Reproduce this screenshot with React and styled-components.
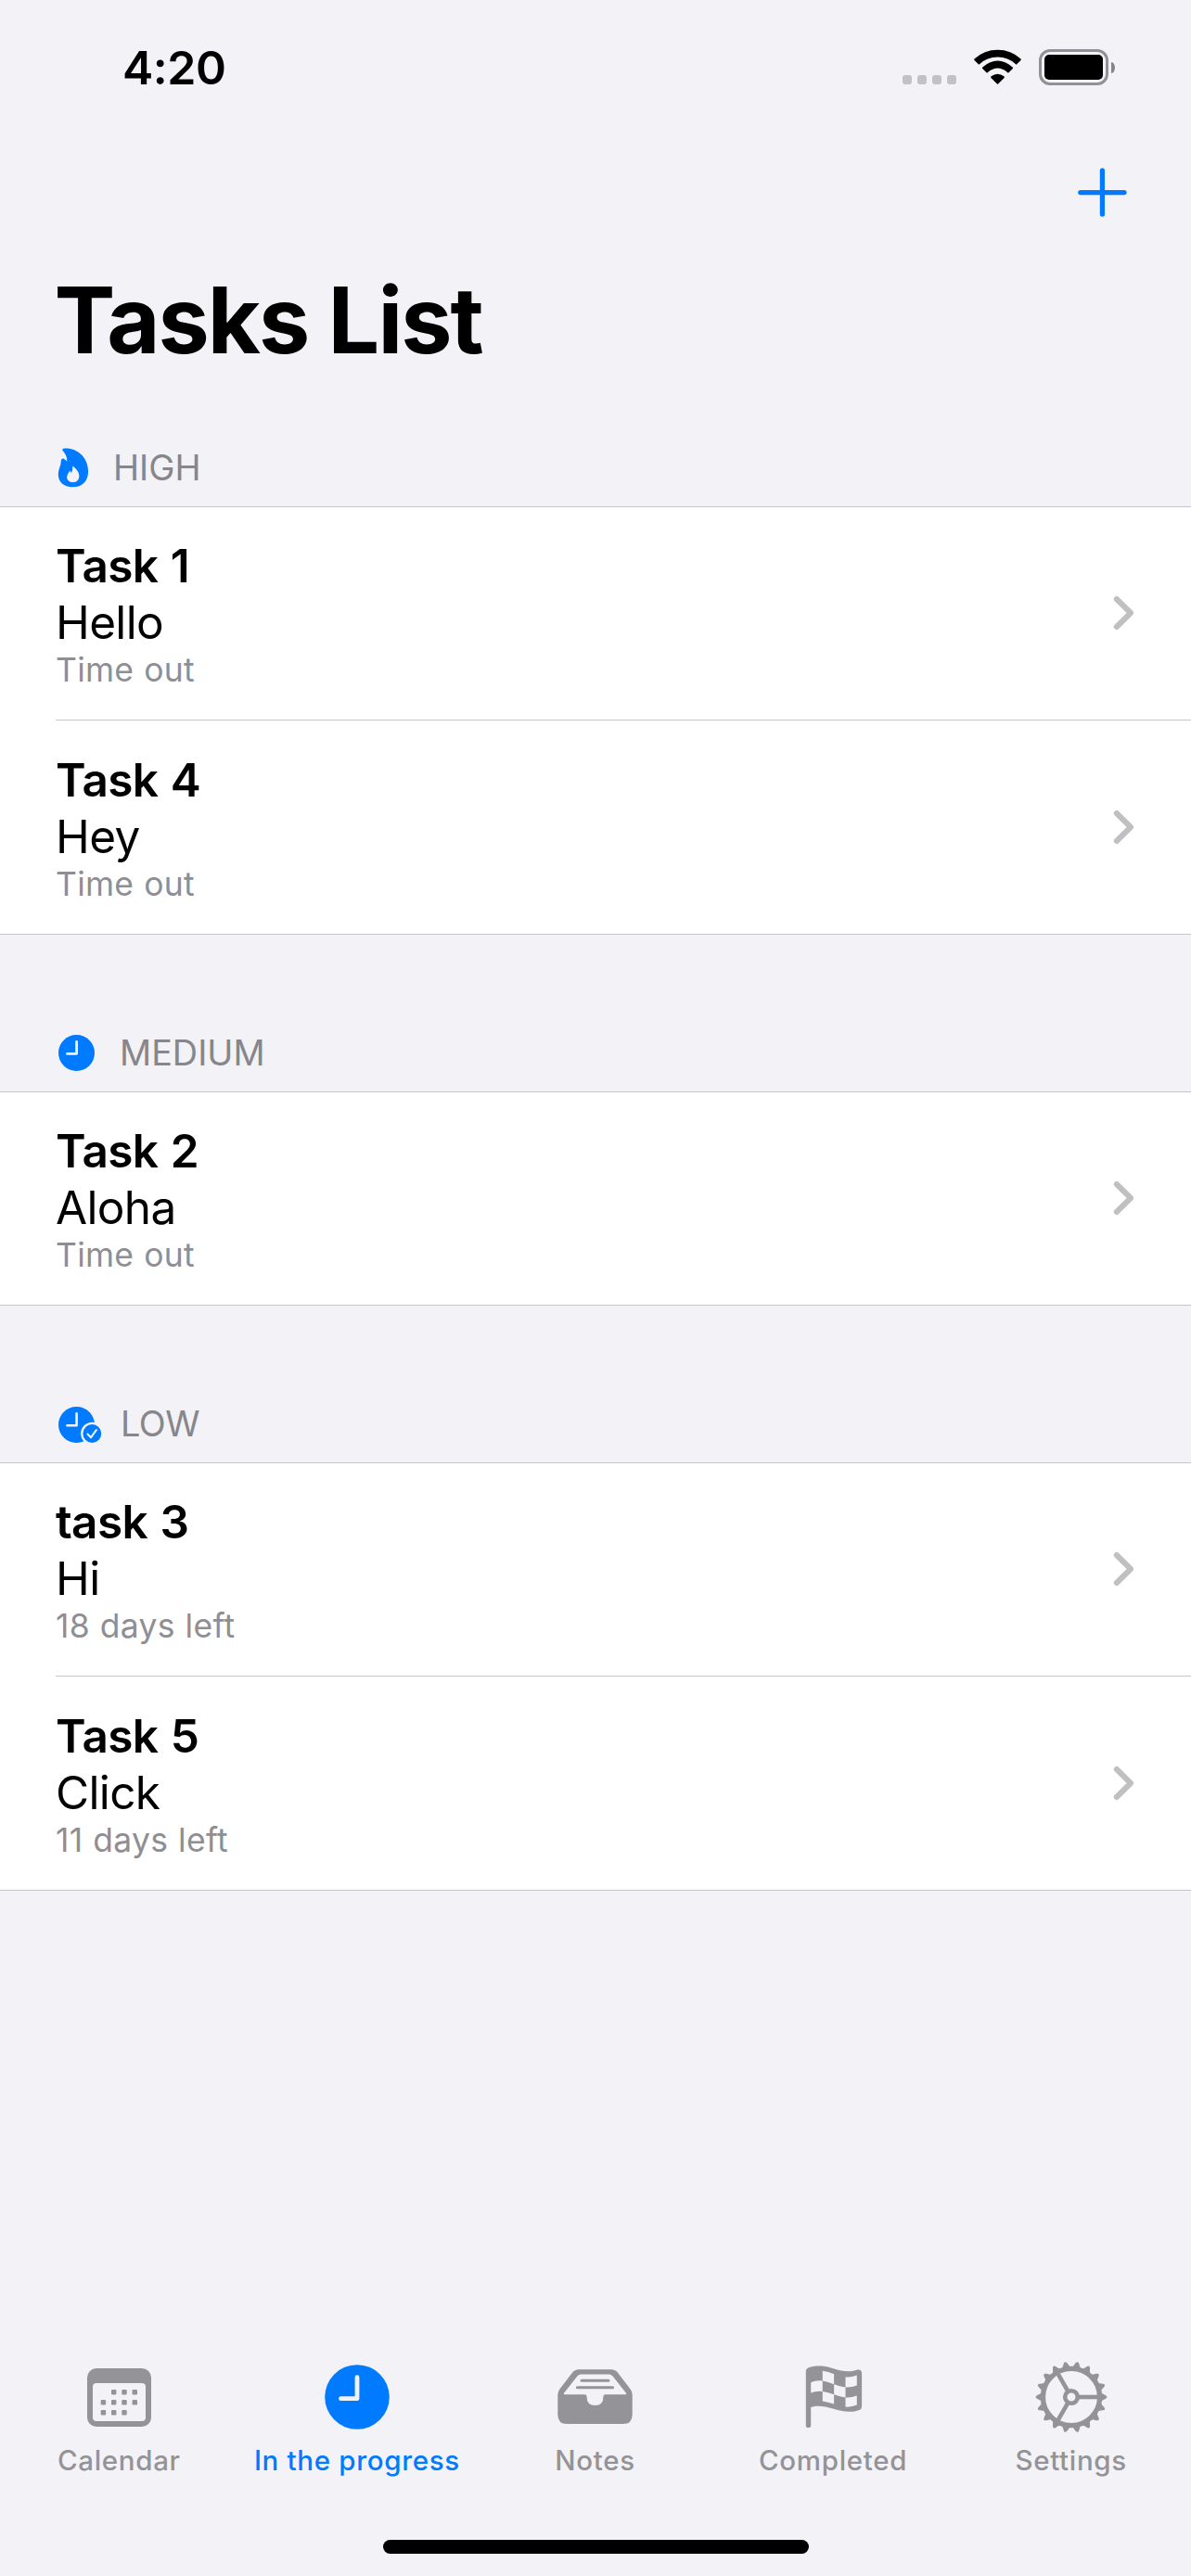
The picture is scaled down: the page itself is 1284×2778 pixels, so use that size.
import React from "react";
import styled, { createGlobalStyle } from "styled-components";

const GlobalStyle = createGlobalStyle`
  * { box-sizing: border-box; }
  body { margin: 0; background: #f2f2f7; }
`;

const BLUE = "#007aff";
const GRAY = "#939398";

const Screen = styled.div`
  width: 1284px;
  height: 2778px;
  display: flex;
  flex-direction: column;
  background: #f2f2f7;
  color: #000;
  font-family: Inter, "Liberation Sans", sans-serif;
  overflow: hidden;
  white-space: nowrap;
`;

const StatusBar = styled.header`
  height: 132px;
  padding: 43px 82px 0 132px;
  display: flex;
  justify-content: space-between;
  align-items: flex-start;
`;

const Clock = styled.time`
  font-size: 50px;
  line-height: 60px;
  font-weight: 600;
  letter-spacing: -0.5px;
`;

const StatusIcons = styled.div`
  display: flex;
  align-items: flex-start;
  padding-top: 10px;
`;

const Cellular = styled.div`
  display: flex;
  gap: 6px;
  margin: 28px 19px 0 0;
`;

const CellDot = styled.span`
  width: 10px;
  height: 10px;
  border-radius: 3px;
  background: #c2c1c6;
`;

const WifiSvg = styled.svg`
  width: 51px;
  height: 39px;
  margin-right: 19px;
`;

const Battery = styled.div`
  width: 75px;
  height: 39px;
  padding: 3px;
  border: 3px solid #929296;
  border-radius: 12px;
`;

const BatteryLevel = styled.div`
  height: 27px;
  border-radius: 5px;
  background: #000;
`;

const BatteryTip = styled.div`
  width: 4px;
  height: 12px;
  margin: 13.5px 0 0 3px;
  border-radius: 0 4px 4px 0 / 0 6px 6px 0;
  background: #858588;
`;

const NavBar = styled.nav`
  height: 153px;
  display: flex;
  justify-content: flex-end;
  align-items: flex-start;
  padding: 49px 69px 0 0;
`;

const IconButton = styled.button`
  display: flex;
  padding: 0;
  border: 0;
  background: none;
  color: ${BLUE};
`;

const Title = styled.h1`
  margin: 0;
  padding-left: 58.5px;
  font-size: 98.7px;
  line-height: 120px;
  font-weight: 700;
  letter-spacing: -2px;
`;

const SectionHeader = styled.h2`
  margin: 0;
  height: ${(p) => (p.$first ? 141 : 169)}px;
  padding: 0 0 18px 60px;
  display: flex;
  align-items: flex-end;
  font-size: 37.8px;
  line-height: 48px;
  font-weight: 400;
  color: #86868b;
  letter-spacing: ${(p) => p.$track}px;
`;

const SectionIcon = styled.span`
  display: flex;
  width: ${(p) => p.$width}px;
  height: 48px;
  color: ${BLUE};
`;

const List = styled.ul`
  margin: 0;
  padding: 0;
  list-style: none;
  background: #fff;
  border-top: 1px solid #c6c6c8;
  border-bottom: 1px solid #c6c6c8;
`;

const Row = styled.li`
  margin-left: 60px;
  height: ${(p) => (p.$divided ? 231 : 229)}px;
  padding-right: 60px;
  display: flex;
  justify-content: space-between;
  align-items: center;
  ${(p) => p.$divided && "border-top: 1px solid #c6c6c8;"}
`;

const TaskName = styled.div`
  font-size: 49.5px;
  line-height: 61px;
  font-weight: 600;
  letter-spacing: -0.6px;
  word-spacing: 1.4px;
`;

const TaskNote = styled.div`
  font-size: 49.5px;
  line-height: 61px;
  letter-spacing: -0.65px;
`;

const TaskDue = styled.div`
  font-size: 35.5px;
  line-height: 41px;
  color: #8e8e93;
  letter-spacing: 0.25px;
  word-spacing: 0.7px;
`;

const ChevronSvg = styled.svg`
  width: 24px;
  height: 38px;
  margin-bottom: 1px;
`;

const Spacer = styled.div`
  flex: 1;
`;

const TabBar = styled.nav`
  height: 249px;
  display: flex;
  align-items: flex-start;
  padding: 12px 1px 0 0;
`;

const Tab = styled.a`
  flex: 1 1 0;
  min-width: 0;
  display: flex;
  flex-direction: column;
  align-items: center;
  color: ${(p) => (p.$active ? BLUE : GRAY)};
  font-size: 29.5px;
  line-height: 36px;
  font-weight: 500;
  letter-spacing: 0.68px;
`;

const TabIcon = styled.span`
  display: flex;
  height: 94px;
`;

const HomeArea = styled.div`
  height: 39px;
  margin-top: -39px;
  display: flex;
  justify-content: center;
`;

const HomeIndicator = styled.div`
  width: 459px;
  height: 15px;
  border-radius: 8px;
  background: #000;
`;

const Wifi = () => (
  <WifiSvg viewBox="0 0 51 39" fill="#000">
    <path d="M25.5 38 L18.4 31 Q17.6 30.1 18.6 29.3 Q25.5 24 32.4 29.3 Q33.4 30.1 32.6 31 Z" />
    <path d="M9.2 20.9 Q8.6 20.2 9.3 19.5 Q25.5 5.7 41.7 19.5 Q42.4 20.2 41.8 20.9 L37.5 25.2 Q37 25.7 36.3 25.2 Q25.5 16 14.7 25.2 Q14 25.7 13.5 25.2 Z" />
    <path d="M0.5 11.9 Q-0.1 11.2 0.5 10.5 Q11 0.7 25.5 0.7 Q40 0.7 50.5 10.5 Q51.1 11.2 50.5 11.9 L46.2 16.2 Q45.7 16.6 45.1 16.2 Q37 8.4 25.5 8.4 Q14 8.4 5.9 16.2 Q5.3 16.6 4.8 16.2 Z" />
  </WifiSvg>
);

const PlusIcon = () => (
  <svg width="53" height="53" viewBox="0 0 53 53" fill="none" stroke="currentColor" strokeWidth="5.2" strokeLinecap="round">
    <path d="M26.4 2.9v47.2M2.8 26.6h47.2" />
  </svg>
);

const Chevron = () => (
  <ChevronSvg viewBox="0 0 24 38" fill="none" stroke="#c0c0c2" strokeWidth="6" strokeLinecap="round" strokeLinejoin="round">
    <path d="M3.8 4L19 19L3.8 34" />
  </ChevronSvg>
);

const FlameIcon = () => (
  <svg width="40" height="48" viewBox="0 0 40 48" fill="currentColor" fillRule="evenodd">
    <path d="M7.6 6C6.6 4.6 7.8 3.6 10.4 3.6C24 3.4 35.1 14 35.1 28.5C35.1 39 28.5 45.3 18.4 45.3C8.8 45.3 2.8 39.8 2.8 31.5C2.8 25.6 5.8 22.5 5.8 17.5C5.8 14.8 7.6 13.8 9.2 14.9C10.6 15.8 11.4 16.6 12.2 17.4C12.6 12.8 10.4 9.4 7.6 6ZM19.2 23.2C18.5 22.6 18.2 23 18.2 23.8C18.4 26.6 17.6 28.6 16.8 30C16.2 29.2 16 28.2 15.8 27.4C13.8 29.6 12.2 32.2 12.2 34.8C12.2 38 14.8 40.1 18.6 40.1C22.6 40.1 25.3 37.4 25.3 33.4C25.3 29.2 22.8 26 19.2 23.2Z" />
  </svg>
);

const SmallClockIcon = () => (
  <svg width="48" height="48" viewBox="0 0 48 48" fill="none">
    <circle cx="22.5" cy="24.5" r="19.5" fill="currentColor" />
    <path d="M22.6 12.3V25.3H12.4" stroke="#f2f2f7" strokeWidth="2.8" strokeLinecap="round" strokeLinejoin="round" />
  </svg>
);

const ClockCheckIcon = () => (
  <svg width="52" height="48" viewBox="0 0 52 48" fill="none">
    <circle cx="22.5" cy="25.5" r="19.5" fill="currentColor" />
    <path d="M22.6 13.3V26.3H12.4" stroke="#f2f2f7" strokeWidth="2.6" strokeLinecap="round" strokeLinejoin="round" />
    <circle cx="39.3" cy="35" r="12.2" fill="#f2f2f7" />
    <circle cx="39.3" cy="35" r="9.9" fill="currentColor" />
    <path d="M34.6 35.6L38 39.2L43.9 31.2" stroke="#f2f2f7" strokeWidth="2.1" strokeLinecap="round" strokeLinejoin="round" />
  </svg>
);

const CALENDAR_DOTS = [
  [28.7, 25.7], [40, 25.7], [51.3, 25.7],
  [17.4, 36.7], [28.7, 36.7], [40, 36.7], [51.3, 36.7],
  [17.4, 47.7], [28.7, 47.7], [40, 47.7],
];

const CalendarIcon = () => (
  <svg width="69" height="88" viewBox="0 -13 69 88" fill="currentColor">
    <rect width="69" height="63" rx="10" />
    <rect x="6" y="16" width="57" height="41" rx="4" fill="#f2f2f7" />
    {CALENDAR_DOTS.map(([x, y]) => (
      <rect key={`${x}-${y}`} x={x - 2.7} y={y - 2.7} width="5.4" height="5.4" rx="1.2" />
    ))}
  </svg>
);

const BigClockIcon = () => (
  <svg width="70" height="88" viewBox="0 -9 70 88" fill="none">
    <circle cx="35" cy="35" r="34.8" fill="currentColor" />
    <path d="M35 13.7V36.7H17.5" stroke="#f2f2f7" strokeWidth="4.8" strokeLinecap="round" strokeLinejoin="round" />
  </svg>
);

const TrayIcon = () => (
  <svg width="81" height="88" viewBox="0 -14 81 88" fill="none">
    <path d="M0.3 49V27.5Q0.3 24.5 2.4 21.6L16 3.8Q18.8 0.3 23 0.3H58Q62.2 0.3 65 3.8L78.6 21.6Q80.7 24.5 80.7 27.5V49Q80.7 59 70.7 59H10.3Q0.3 59 0.3 49Z" fill="currentColor" />
    <path d="M7 25.8L21.2 7.8Q23 5.6 25.5 5.6H55.5Q58 5.6 59.8 7.8L74 25.8Q74.8 27.2 73.4 27.2H51.5Q49.5 27.2 49.5 29.2Q49.5 39 40.5 39Q31.5 39 31.5 29.2Q31.5 27.2 29.5 27.2H7.6Q6.2 27.2 7 25.8Z" fill="#f2f2f7" />
    <path d="M26 12.2H55M21.4 19.8H59.6" stroke="currentColor" strokeWidth="3" strokeLinecap="round" />
  </svg>
);

const FlagIcon = () => (
  <svg width="61" height="88" viewBox="-0.8 -10 61 88" fill="none" overflow="visible">
    <path d="M0 6.5Q0 3.4 3 2.2C9 -0.2 19 -0.2 27 2.4C37 5.6 46 8 54.5 4.8Q60.3 3.4 60.3 8.8V44Q60.3 47 57.6 48C49 51.4 38 49.6 29 46.6C20 43.6 12 42.6 5.4 45V64.4Q5.4 67 2.7 67Q0 67 0 64.4Z" fill="currentColor" />
    <g fill="#f2f2f7">
      <path d="M18 5.8Q24 6.8 30.3 9.2V20.2Q24 17.6 18 16.6Z" />
      <path d="M42.7 12.4Q49 13 55 10.6V21.6Q49 23.8 42.7 23.4Z" />
      <path d="M5.4 18.2Q11.4 15.6 18 16.6V28Q11.4 27 5.4 29.6Z" />
      <path d="M30.3 20.2Q36.6 22.4 42.7 23.4V34.4Q36.6 33.6 30.3 31.2Z" />
      <path d="M18 28Q24 28.8 30.3 31.2V41.4Q24 39.2 18 38.4Z" />
      <path d="M42.7 34.4Q49 34.8 55 32.4V42.6Q49 45.2 42.7 44.6Z" />
    </g>
  </svg>
);

const TEETH = Array.from({ length: 18 }, (_, i) => i * 20);

const GearIcon = () => (
  <svg width="78" height="88" viewBox="-39 -44 78 88" fill="none" stroke="currentColor">
    <circle r="30.6" strokeWidth="5.4" />
    <circle r="6.8" strokeWidth="4.6" />
    {[0, 120, 240].map((angle) => (
      <path key={angle} d="M8 0H29" strokeWidth="4.6" transform={`rotate(${angle})`} />
    ))}
    {TEETH.map((angle) => (
      <path
        key={angle}
        d="M32 -4.4L37 -1.8Q38.4 -1 38.4 0Q38.4 1 37 1.8L32 4.4Z"
        fill="currentColor"
        stroke="none"
        transform={`rotate(${angle})`}
      />
    ))}
  </svg>
);

const SECTIONS = [
  {
    name: "HIGH",
    Icon: FlameIcon,
    iconWidth: 62,
    track: 0,
    tasks: [
      { name: "Task 1", note: "Hello", due: "Time out" },
      { name: "Task 4", note: "Hey", due: "Time out" },
    ],
  },
  {
    name: "MEDIUM",
    Icon: SmallClockIcon,
    iconWidth: 69,
    track: 0,
    tasks: [{ name: "Task 2", note: "Aloha", due: "Time out" }],
  },
  {
    name: "LOW",
    Icon: ClockCheckIcon,
    iconWidth: 70,
    track: -0.5,
    tasks: [
      { name: "task 3", note: "Hi", due: "18 days left" },
      { name: "Task 5", note: "Click", due: "11 days left" },
    ],
  },
];

const TABS = [
  { label: "Calendar", Icon: CalendarIcon },
  { label: "In the progress", Icon: BigClockIcon, active: true },
  { label: "Notes", Icon: TrayIcon },
  { label: "Completed", Icon: FlagIcon },
  { label: "Settings", Icon: GearIcon },
];

export default function App() {
  return (
    <Screen>
      <GlobalStyle />
      <StatusBar>
        <Clock>4:20</Clock>
        <StatusIcons>
          <Cellular>
            <CellDot />
            <CellDot />
            <CellDot />
            <CellDot />
          </Cellular>
          <Wifi />
          <Battery>
            <BatteryLevel />
          </Battery>
          <BatteryTip />
        </StatusIcons>
      </StatusBar>
      <NavBar>
        <IconButton aria-label="Add task">
          <PlusIcon />
        </IconButton>
      </NavBar>
      <Title>Tasks List</Title>
      {SECTIONS.map(({ name, Icon, iconWidth, track, tasks }, s) => (
        <section key={name}>
          <SectionHeader $first={s === 0} $track={track}>
            <SectionIcon $width={iconWidth}>
              <Icon />
            </SectionIcon>
            {name}
          </SectionHeader>
          <List>
            {tasks.map((task, i) => (
              <Row key={task.name} $divided={i > 0}>
                <div>
                  <TaskName>{task.name}</TaskName>
                  <TaskNote>{task.note}</TaskNote>
                  <TaskDue>{task.due}</TaskDue>
                </div>
                <Chevron />
              </Row>
            ))}
          </List>
        </section>
      ))}
      <Spacer />
      <TabBar>
        {TABS.map(({ label, Icon, active }) => (
          <Tab key={label} $active={active}>
            <TabIcon>
              <Icon />
            </TabIcon>
            {label}
          </Tab>
        ))}
      </TabBar>
      <HomeArea>
        <HomeIndicator />
      </HomeArea>
    </Screen>
  );
}
